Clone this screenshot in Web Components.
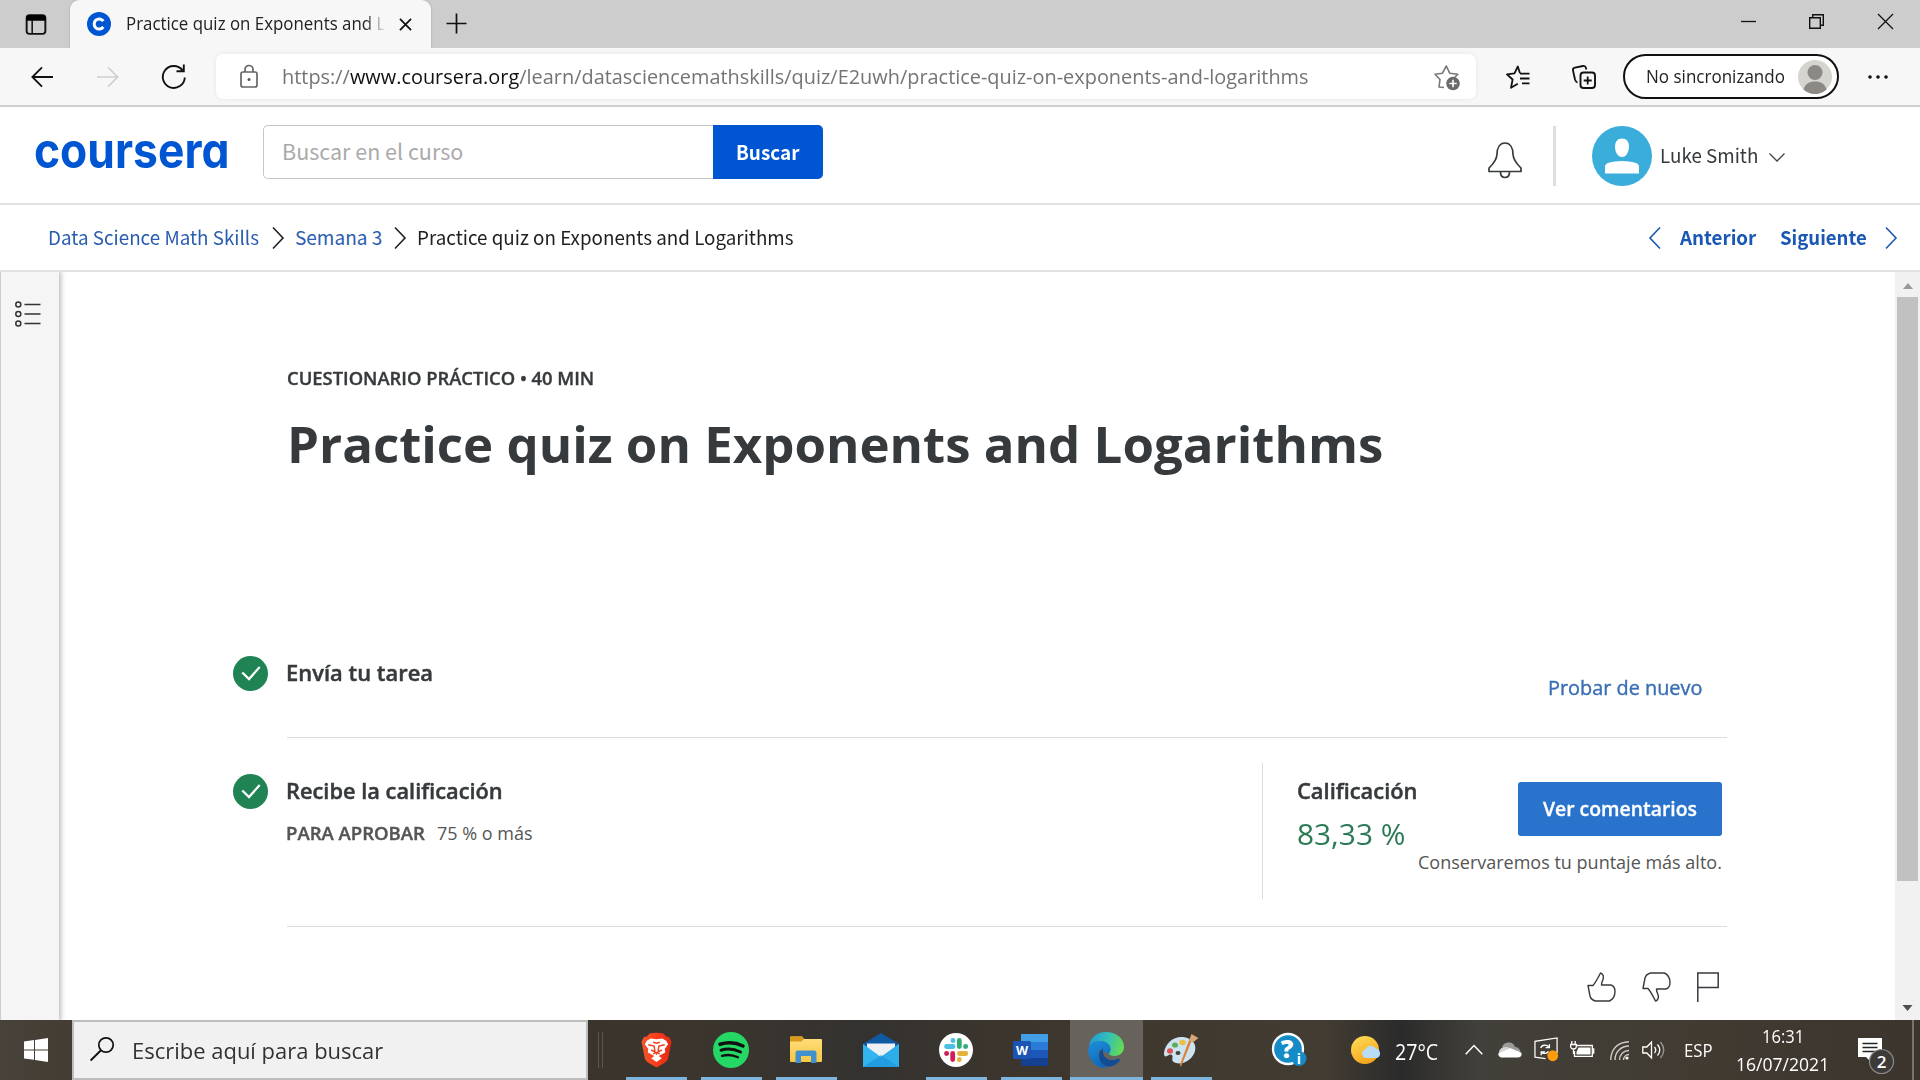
<!DOCTYPE html>
<html lang="es">
<head>
<meta charset="utf-8">
<title>Practice quiz on Exponents and Logarithms</title>
<style>
html,body{margin:0;width:1920px;height:1080px;overflow:hidden;background:#fff}
body{font-family:"Open Sans","Noto Sans",sans-serif;color:#373a3c}
</style>
</head>
<body>
<desktop-screen></desktop-screen>
<script>
const svg=(vb,body)=>`<svg viewBox="${vb}" fill="none" xmlns="http://www.w3.org/2000/svg">${body}</svg>`;
const ICONS={
tabs:svg('0 0 22 22','<rect x="1.2" y="1.2" width="19.6" height="19.6" rx="3" stroke="#111" stroke-width="2"/><path d="M1 4a3 3 0 0 1 3-3h14a3 3 0 0 1 3 3v3H1z" fill="#000"/><path d="M7 6v15" stroke="#111" stroke-width="1.6"/>'),
favicon:svg('0 0 24 24','<circle cx="12" cy="12" r="12" fill="#0056d2"/><path d="M16.3 9.2A5 5 0 1 0 16.3 14.8" stroke="#fff" stroke-width="3"/>'),
x:svg('0 0 14 14','<path d="M1 1l12 12M13 1L1 13" stroke="#111" stroke-width="1.9"/>'),
plus:svg('0 0 22 22','<path d="M11 .5v21M.5 11h21" stroke="#111" stroke-width="1.8"/>'),
min:svg('0 0 15 15','<path d="M0 7.5h15" stroke="#111" stroke-width="1.3"/>'),
restore:svg('0 0 15 15','<path d="M.7 3.7h10.6v10.6H.7zM3.7 3.5V.7h10.6v10.6h-3" stroke="#111" stroke-width="1.4"/>'),
close:svg('0 0 15 15','<path d="M0 0l15 15M15 0L0 15" stroke="#111" stroke-width="1.3"/>'),
back:svg('0 0 24 24','<path d="M12 1.5L1.5 12 12 22.5M1.5 12H24" stroke="#111" stroke-width="2"/>'),
fwd:svg('0 0 24 24','<path d="M12 1.5L22.5 12 12 22.5M22.5 12H0" stroke="#cfcfcf" stroke-width="1.8"/>'),
reload:svg('0 0 24 24','<path d="M22.8 12.5A11 11 0 1 1 20.5 5.2M14.5 6.2h7.3V-.5" stroke="#111" stroke-width="1.9"/>'),
lock:svg('0 0 18 23','<rect x="1" y="7" width="16" height="15" rx="2" stroke="#666" stroke-width="1.7"/><path d="M5 7V4.500a4 4 0 0 1 8 0V7" stroke="#666" stroke-width="1.7"/><circle cx="9" cy="14.5" r="1.5" fill="#555"/>'),
starplus:svg('0 0 26 26','<path d="M10 22.5L5 22l1-7.500L1 9.300l7.300-1L12.300 1l3.500 7.300 8 1-3 3" stroke="#777" stroke-width="1.6" stroke-linejoin="round"/><circle cx="19" cy="18.5" r="6.8" fill="#6a6a6a"/><path d="M19 14.800v7.400M15.300 18.500h7.400" stroke="#fff" stroke-width="1.6"/>'),
fav:svg('0 0 24 24','<path d="M14 8.300L11.800 1.500 8.500 8.300 1 9.300l5.600 5.200L5 22.800l6.800-4" stroke="#111" stroke-width="1.8" stroke-linejoin="round"/><path d="M14 8.700h9.500M14 13.500h9.500M16 18.300h7.500" stroke="#111" stroke-width="1.8"/>'),
coll:svg('0 0 24 24','<rect x="8.500" y="7.500" width="14.500" height="15.500" rx="3" stroke="#111" stroke-width="1.900"/><path d="M15.700 11.500v8M11.700 15.500h8M5.500 17.500C4 17.300 3.500 16 3 14.500L1 5.500C.700 4 1.500 3 3 2.700L11 1c1.600-.300 2.600.500 3 2l.300 1.500" stroke="#111" stroke-width="1.800"/>'),
person:svg('0 0 34 34','<circle cx="17" cy="17" r="17" fill="#d6d4d1"/><circle cx="17" cy="12.500" r="7.500" fill="#8c8884"/><path d="M5.500 29.500C7 24 11 21.500 17 21.500s10 2.500 11.500 8A17 17 0 0 1 5.500 29.500z" fill="#8c8884"/>'),
dots:svg('0 0 20 4','<circle cx="2" cy="2" r="1.800" fill="#111"/><circle cx="10" cy="2" r="1.800" fill="#111"/><circle cx="18" cy="2" r="1.800" fill="#111"/>'),
bell:svg('0 0 34 37','<path d="M1 29.500V26C4.500 22.500 8.500 19 9 12.500 9 5.500 12 1 17 1s8 4.500 8 11.500c.500 6.500 4.500 10 8 13.500v3.500z" stroke="#373a3c" stroke-width="1.700" stroke-linejoin="round"/><path d="M12.500 30c0 3.500 2 5.500 4.500 5.500s4.500-2 4.500-5.500" stroke="#373a3c" stroke-width="1.700"/>'),
avatar:svg('0 0 60 60','<circle cx="30" cy="30" r="30" fill="#3aaddb"/><path d="M30 12.500c4.500 0 7 3 7 8.500 0 5-3 10-7 10s-7-5-7-10c0-5.500 2.500-8.500 7-8.500z" fill="#fff"/><path d="M13 47.500V41c0-2.500 1.500-3.500 4-4.200C20.500 35.800 25 35 30 35s9.500.800 13 1.800c2.500.700 4 1.700 4 4.200v6.500z" fill="#fff"/>'),
down:svg('0 0 16 9','<path d="M.500.500L8 8 15.500.500" stroke="#444" stroke-width="1.300"/>'),
right:svg('0 0 12 22','<path d="M1 .500L11 11 1 21.500" stroke="currentColor" stroke-width="1.600"/>'),
left:svg('0 0 12 22','<path d="M11 .500L1 11l10 10.500" stroke="currentColor" stroke-width="1.600"/>'),
list:svg('0 0 26 26','<g stroke="#333" stroke-width="1.500"><ellipse cx="3.300" cy="3.500" rx="2.500" ry="2.500"/><ellipse cx="3.300" cy="13" rx="2.500" ry="2.500"/><ellipse cx="3.300" cy="22.500" rx="2.500" ry="2.500"/><path d="M9.500 3.500H25.500M9.500 13H25.500M9.500 22.500H25.500"/></g>'),
check:svg('0 0 35 35','<circle cx="17.500" cy="17.500" r="17.500" fill="#1f8354"/><path d="M9.300 16.500l6.700 6.500L26.700 11" stroke="#fff" stroke-width="2.300"/>'),
up1:svg('0 0 29 30','<path d="M1 13.500h5C9 10 11 6 13.500 1c3 1 3.500 4 2.300 7-.800 2-1.500 3.500-1.300 5H24c3 1 4 3.500 4 6.500 0 4-1.500 7.500-5.500 9.500H8.500C5 28 3.500 26 3 24z" stroke="#373a3c" stroke-width="1.400" stroke-linejoin="round"/>'),
flag:svg('0 0 22 30','<path d="M.800 30V1h20.400v14.500H.800" stroke="#373a3c" stroke-width="1.500"/>'),
sup:svg('0 0 10 6','<path d="M0 6L5 0l5 6z" fill="#999"/>'),
sdn:svg('0 0 10 6','<path d="M0 0L5 6l5-6z" fill="#505050"/>'),
win:svg('0 0 24 24','<path d="M0 3.500l10-1.400v9.300H0zM11 2l13-2v11.400H11zM0 12.500h10v9.300L0 20.500zM11 12.500h13V24l-13-2z" fill="#fff"/>'),
search:svg('0 0 24 24','<circle cx="16" cy="8" r="7.200" stroke="#111" stroke-width="1.700"/><path d="M11 13.300L.600 23.500" stroke="#111" stroke-width="1.900"/>'),
brave:svg('0 0 32 36','<defs><linearGradient id="b"><stop stop-color="#f0582a"/><stop offset=".5" stop-color="#f93c1c"/><stop offset="1" stop-color="#e02a10"/></linearGradient></defs><path d="M9 1Q16-.500 23 1l3 3 3 .500 2.500 5-1 5L28 27q-1 3-4 4.500L16 36 8 31.500Q5 30 4 27L1.500 14.500l-1-5L3 4.500 6 4z" fill="url(#b)"/><path d="M6 8.500l4-2.500 6 1 6-1 4 2.500 2 3.500-3.500 5 .500 3.500-5.500 3-1 1 3 2-5.500 4-5.500-4 3-2-1-1-5.500-3 .500-3.500L4 12z" fill="#fff"/><path d="M7.500 12.500l6 1.500 1 6-4-2M24.500 12.500l-6 1.500-1 6 4-2M12.500 10l3.500 1 3.500-1M12.500 22l3.500-1.500 3.500 1.500M16 20v3" stroke="#f0401f" stroke-width="1.500"/>'),
spotify:svg('0 0 36 36','<circle cx="18" cy="18" r="18" fill="#25d865"/><path d="M7 12.300Q19 8.500 30 14" stroke="#111" stroke-width="3.600" stroke-linecap="round"/><path d="M8 18.200Q18 15.300 27.500 20" stroke="#111" stroke-width="3" stroke-linecap="round"/><path d="M9 23.800Q17.500 21.500 25 25.300" stroke="#111" stroke-width="2.400" stroke-linecap="round"/>'),
folder:svg('0 0 34 28','<defs><linearGradient id="f" x2="0" y2="1"><stop stop-color="#ffdf7e"/><stop offset="1" stop-color="#f8c745"/></linearGradient></defs><path d="M1 1.500Q1 .500 2 .500H13l2 2.500H32q1 0 1 1V25q0 1-1 1H2q-1 0-1-1z" fill="url(#f)"/><path d="M1 1.500Q1 .500 2 .500H13l2 2.500-2.500 2.500H1z" fill="#d9991b"/><path d="M6.500 27V17q0-2.500 2.500-2.500H25q2.500 0 2.500 2.500V27H22V20H12V27z" fill="#4291cf"/>'),
mail:svg('0 0 36 34','<path d="M18 0L36 11v7H0v-7z" fill="#1059a3"/><path d="M4 10.500H32V25H4z" fill="#edf1f6"/><path d="M0 11l18 13L36 11V34H0z" fill="#32b5ef"/><path d="M18 24L36 11V34z" fill="#2facea"/><path d="M0 34H36L18 22z" fill="#1b90d8" opacity=".65"/>'),
slack:svg('0 0 34 34','<circle cx="17" cy="17" r="17" fill="#fff"/><g stroke-width="4.800" stroke-linecap="round"><path d="M7.500 13.500h6.500M14 7.500v.200" stroke="#4bbfe8"/><path d="M20.300 7.500V13.500M26.500 13.500h.200" stroke="#30ad77"/><path d="M13.700 20.500V26.500M7.500 20.500h.200" stroke="#cd2058"/><path d="M20.300 20.500h6.500M20.300 26.500v.200" stroke="#e3b33c"/></g>'),
word:svg('0 0 36 34','<rect x="8" y="1" width="27" height="32" rx="1.500" fill="#153f91"/><rect x="8" y="17" width="27" height="8" fill="#1c56b8"/><rect x="8" y="9" width="27" height="8" fill="#2c7bd6"/><rect x="8" y="1" width="27" height="8" fill="#429fe6"/><rect x="0" y="8" width="18" height="18" rx="1.500" fill="#1a55b5"/><text x="9" y="21.500" text-anchor="middle" font-family="Open Sans" font-weight="700" font-size="12.500" fill="#fff">W</text>'),
edge:svg('0 0 36 36','<defs><linearGradient id="e1" x1="0" y1=".3" x2="1" y2=".5"><stop stop-color="#229bda"/><stop offset=".5" stop-color="#32bfba"/><stop offset="1" stop-color="#65dc50"/></linearGradient><linearGradient id="e2" x1="0" y1="0" x2=".4" y2="1"><stop stop-color="#1c90dc"/><stop offset="1" stop-color="#1068ba"/></linearGradient></defs><path d="M1 14C2 6 9 0 18 0c11 0 18 7 18 15 0 6-5 9-9.500 9-3.500 0-5.500-1.300-5.500-2.500 0-.8 1.500-1.500 1.500-4C22.500 12 17 9 12 9 6 9 2 12 1 14z" fill="url(#e1)"/><path d="M.5 16C2 11 7 9 12 9c6 0 10.500 3.500 10.500 8 0 2-1.500 3-1.500 4.500-3 0-7-4.500-9-4-4 4 0 14 7 18.500C9 37-1 28 .5 16z" fill="url(#e2)"/><path d="M15 16.500C10 19 10 26 13.500 31c4 5 12 5.500 18-2 1.500-2-.5-2.500-2-2-8 3.500-16-1.500-14.500-10.500z" fill="#124c94"/>'),
paint:svg('0 0 36 36','<path d="M20 5C11 4 2 11 1 21c0 3 1 4 3 3l2-1c2-1 4 0 3.500 2-.5 3-.5 5 3.500 6 8 2 17-4 19-12C34 11 28 6 20 5z" fill="#cde3f0"/><ellipse cx="7" cy="19" rx="3" ry="2.800" fill="#e05353"/><ellipse cx="12" cy="13" rx="3" ry="2.600" fill="#61ad57"/><ellipse cx="19.500" cy="10.500" rx="3.200" ry="2.800" fill="#eebf45"/><ellipse cx="15" cy="21" rx="2.500" ry="2" fill="#44403a"/><path d="M29 8L18.500 33.500l-1 1.500-.5-2.500L26.500 7z" fill="#dc8237"/><path d="M28.500 2l7 4-5 4-4.500-1.500z" fill="#d7a679"/>'),
help:svg('0 0 34 34','<circle cx="16" cy="16" r="15" fill="#168cc7" stroke="#fff" stroke-width="2.300"/><text x="15" y="25" text-anchor="middle" font-family="Open Sans" font-weight="800" font-size="25" fill="#fff">?</text><circle cx="27" cy="25.500" r="7.500" fill="#168cc7"/><text x="27" y="31" text-anchor="middle" font-family="Open Sans" font-weight="700" font-size="14" fill="#fff">i</text>'),
weather:svg('0 0 30 28','<defs><linearGradient id="w" x2=".5" y2="1"><stop stop-color="#ffdf5a"/><stop offset="1" stop-color="#f6a51d"/></linearGradient></defs><circle cx="14" cy="14" r="14" fill="url(#w)"/><path d="M15 22a4.500 4.500 0 0 1-.5-8.800 6 6 0 0 1 10.500-.7A5 5 0 0 1 26 22z" fill="#b9dcf6"/>'),
caret:svg('0 0 18 11','<path d="M.700 10.300L9 1.500l8.300 8.800" stroke="#fff" stroke-width="1.500"/>'),
cloud:svg('0 0 24 16','<path d="M5 15.500a5 5 0 0 1-1-9.500 6 6 0 0 1 6-5.500 6.500 6.500 0 0 1 7 4.500 5.500 5.500 0 0 1 5.500 5z" fill="#9d9b98"/><path d="M4 15.500C1 15.500 0 13 .5 11L12 6l11 4.500c1.500 2 0 5-3 5z" fill="#fff"/><path d="M4 6q4-2 8 0L2 10.500Q0 9 4 6z" fill="#d7d6d5"/>'),
update:svg('0 0 26 26','<path d="M12 22.500L1 21V4.500L24 1V17" stroke="#fff" stroke-width="1.300"/><path d="M7 11.500C8 8 13 7.500 15.500 10.500M16 7.500v3.500h-4M15 15c-1 2-4.500 3-7 1M7.500 19v-3.500h4" stroke="#fff" stroke-width="1.400"/><circle cx="19.500" cy="19.500" r="5.600" fill="#ff9c0b"/>'),
battery:svg('0 0 24 17','<path d="M6.500 4.500h15.800v10.800H4.500V10M22.500 8h1.200v4h-1.200" stroke="#fff" stroke-width="1.300"/><path d="M8.500 6.500h12v7H6.500v-2.500z" fill="#fff"/><path d="M1.800 0v3M5.200 0v3M.700 3.500h5.600V6Q6 8 3.500 8T.700 6zM3.500 8v5" stroke="#fff" stroke-width="1.300"/>'),
wifi:svg('0 0 19 19','<g stroke="#d0cecb" stroke-width="1.400"><path d="M.700 19C1 8 8 1 19 .700M5 19C5 11 11 5 19 5M9.500 19C9.500 13.500 13.500 9.500 19 9.500M13.500 19c0-3 2.500-5.500 5.500-5.500"/></g><circle cx="17" cy="17" r="1.600" fill="#fff"/>'),
sound:svg('0 0 23 18','<path d="M.800 6h4L9.500 1.200v15.600L4.800 12h-4zM12.500 6q2.500 3 0 6M15.500 3.500q4.500 5.500 0 11" stroke="#fff" stroke-width="1.300"/><path d="M18.500 1q6.500 8 0 16" stroke="#999" stroke-width="1.300"/>'),
note:svg('0 0 36 37','<path d="M0 0h24v19H14v6L8 19H0z" fill="#fff"/><path d="M4.500 5.500h15M4.500 9.500h15M4.500 13.500h15" stroke="#222" stroke-width="1.300"/><circle cx="23.500" cy="23.500" r="12" fill="#3c3b3a" stroke="#8d8b88" stroke-width="1.200"/><text x="23.500" y="29.500" text-anchor="middle" font-family="Open Sans" font-weight="600" font-size="17" fill="#fff">2</text>')
};
const def=(name,css,html)=>{
  customElements.define(name,class extends HTMLElement{
    constructor(){super();this.attachShadow({mode:'open'}).innerHTML=`<style>*{box-sizing:border-box}${css}</style>${html}`}
  });
};
/* <ui-icon name w h x y>: x and y are the free space before the icon */
customElements.define('ui-icon',class extends HTMLElement{
  connectedCallback(){
    const a=n=>this.getAttribute(n)||0;
    if(!this.shadowRoot)this.attachShadow({mode:'open'});
    this.shadowRoot.innerHTML=`<style>:host{display:block;flex:none;width:${a('w')}px;height:${a('h')}px;margin-left:${a('x')}px;margin-top:${a('y')}px}svg{display:block;width:100%;height:100%;overflow:visible}</style>${ICONS[a('name')]}`;
  }
});
/* <fit-text w x y>: one line of text set to a measured width */
customElements.define('fit-text',class extends HTMLElement{
  connectedCallback(){
    const a=n=>this.getAttribute(n)||0;
    if(!this.shadowRoot)this.attachShadow({mode:'open'});
    this.shadowRoot.innerHTML=`<style>:host{display:block;flex:none;width:${a('w')}px;margin-left:${a('x')}px;margin-top:${a('y')}px;white-space:nowrap;line-height:1.4}span{display:inline-block;transform-origin:0 50%}</style><span><slot></slot></span>`;
    const s=this.shadowRoot.querySelector('span');
    requestAnimationFrame(()=>{const n=s.offsetWidth;if(n)s.style.transform=`scaleX(${a('w')/n})`});
  }
});

def('browser-tabs',`:host{display:flex;height:48px;background:#cdcdcd;align-items:flex-start;flex:none}
.tab{display:flex;width:361px;height:48px;margin-left:23px;background:#f7f7f7;border-radius:9px 9px 0 0;font-size:17.800px;color:#222;box-shadow:0 0 2px #999}
.clip{width:260px;overflow:hidden;margin:11px 0 0 15px;-webkit-mask:linear-gradient(90deg,#000 92%,transparent 100%)}`,
`<ui-icon name="tabs" w="22" h="21" x="25" y="14"></ui-icon>
<div class="tab"><ui-icon name="favicon" w="24" h="24" x="17" y="12"></ui-icon><div class="clip"><fit-text w="259">Practice quiz on Exponents and L</fit-text></div><ui-icon name="x" w="13" h="13" x="13" y="18"></ui-icon></div>
<ui-icon name="plus" w="21" h="21" x="15" y="13"></ui-icon>
<ui-icon name="min" w="15" h="15" x="1274" y="14"></ui-icon><ui-icon name="restore" w="15" h="15" x="53" y="14"></ui-icon><ui-icon name="close" w="15" h="15" x="54" y="14"></ui-icon>`);

def('browser-toolbar',`:host{display:flex;height:59px;background:#f7f7f7;align-items:center;border-bottom:2px solid #cfcfcf;flex:none}
.addr{display:flex;align-items:center;width:1260px;height:45px;margin-left:30px;background:#fff;border-radius:7px;box-shadow:0 0 4px #e4e4e4;font-size:20.800px;color:#747474}
.addr b{font-weight:400;color:#111}
.pill{display:flex;align-items:center;width:216px;height:45px;margin-left:27px;border:2px solid #111;border-radius:23px;background:#fff;font-size:18px;color:#222}`,
`<ui-icon name="back" w="24" h="22" x="30"></ui-icon><ui-icon name="fwd" w="24" h="22" x="42"></ui-icon><ui-icon name="reload" w="24" h="24" x="42"></ui-icon>
<div class="addr"><ui-icon name="lock" w="18" h="23" x="24"></ui-icon><fit-text w="1027" x="24">https://<b>www.coursera.org</b>/learn/datasciencemathskills/quiz/E2uwh/practice-quiz-on-exponents-and-logarithms</fit-text><ui-icon name="starplus" w="26" h="26" x="125" y="3"></ui-icon></div>
<ui-icon name="fav" w="24" h="24" x="30"></ui-icon><ui-icon name="coll" w="24" h="24" x="42"></ui-icon>
<div class="pill"><fit-text w="139" x="21">No sincronizando</fit-text><ui-icon name="person" w="34" h="34" x="13"></ui-icon></div><ui-icon name="dots" w="20" h="4" x="29"></ui-icon>`);

def('course-header',`:host{display:flex;height:98px;background:#fff;border-bottom:2px solid #e1e1e1;font-family:"Noto Sans CJK SC","Open Sans",sans-serif;align-items:flex-start;flex:none}
.logo{font-family:Inter,sans-serif;font-weight:700;font-size:48.500px;color:#0056d2;font-feature-settings:"cv11";height:68px}
.in{width:450px;height:54px;margin:18px 0 0 34px;border:1.500px solid #c7c7c7;border-right:0;border-radius:5px 0 0 5px;display:flex;align-items:center;font-size:21.500px;color:#aaa}
.go{width:110px;height:54px;margin-top:18px;background:#0056d2;color:#fff;font-weight:700;font-size:19.500px;border-radius:0 5px 5px 0;display:flex;align-items:center}
i{display:block;width:3px;height:60px;background:#dedede;margin:19px 0 0 31px}
.n{font-size:19px;color:#373a3c}`,
`<div class="logo"><fit-text w="195" x="34" y="10">coursera</fit-text></div><div class="in"><fit-text w="181" x="18" y="-2">Buscar en el curso</fit-text></div><div class="go"><fit-text w="63" x="23" y="-1">Buscar</fit-text></div>
<ui-icon name="bell" w="34" h="37" x="665" y="35"></ui-icon><i></i><ui-icon name="avatar" w="60" h="60" x="36" y="19"></ui-icon><div class="n"><fit-text w="98" x="8" y="35">Luke Smith</fit-text></div><ui-icon name="down" w="16" h="9" x="11" y="46"></ui-icon>`);

def('crumb-bar',`:host{display:flex;height:67px;background:#fff;border-bottom:2px solid #e1e1e1;font-family:"Noto Sans CJK SC","Open Sans",sans-serif;align-items:center;flex:none;font-size:19px;color:#1f1f1f}
.l{color:#2a5db0}.b{color:#1a57b4;font-weight:700}ui-icon.b{color:#1a57b4}`,
`<fit-text class="l" w="211" x="48" y="-1">Data Science Math Skills</fit-text><ui-icon name="right" w="12" h="22" x="13"></ui-icon><fit-text class="l" w="87" x="11" y="-1">Semana 3</fit-text><ui-icon name="right" w="12" h="22" x="12"></ui-icon><fit-text w="377" x="11" y="-1">Practice quiz on Exponents and Logarithms</fit-text>
<ui-icon class="b" name="left" w="12" h="22" x="855"></ui-icon><fit-text class="b" w="76" x="19" y="-1">Anterior</fit-text><fit-text class="b" w="87" x="24" y="-1">Siguiente</fit-text><ui-icon class="b" name="right" w="12" h="22" x="18"></ui-icon>`);

def('side-rail',`:host{display:block;width:59px;box-sizing:border-box;flex:none;background:#f5f5f5;border-left:1px solid #ccc;box-shadow:1px 0 5px 1px #bbb;clip-path:inset(0 -10px 0 0)}`,`<div style="display:flex"><ui-icon name="list" w="26" h="26" x="14" y="29"></ui-icon></div>`);

def('scroll-bar',`:host{display:flex;flex-direction:column;align-items:center;width:25px;background:#f1f1f1;flex:none}div{width:21px;height:584px;background:#c1c1c1;margin-top:8px}`,
`<ui-icon name="sup" w="10" h="6" y="11"></ui-icon><div></div><ui-icon name="sdn" w="11" h="6" y="124"></ui-icon>`);

def('quiz-page',`:host{display:flex;flex-direction:column;flex:1;background:#fff}
.cap{font-size:17.600px;font-weight:600;margin-left:287px;-webkit-text-stroke:.35px}
h1{margin:0 0 0 287px;font-size:50px;font-weight:700;line-height:1.4;color:#373a3c}
.wrap{margin-left:-59px;display:flex;flex-direction:column}
.row{display:flex;border-bottom:1px solid #dcdcdc;margin-left:287px;width:1440px;align-items:flex-start}
.t{font-size:21.500px;font-weight:600;-webkit-text-stroke:.45px}
.sub{display:flex;font-size:18px;color:#555}
.sub .p{font-weight:600;-webkit-text-stroke:.4px}
.grade{width:464px;height:136px;border-left:1px solid #dcdcdc;margin-top:25px;display:flex}
.pct{font-size:29px;color:#2b7a55}
.act{display:flex;flex-direction:column;align-items:flex-end;margin-left:1px}
.btn{width:204px;height:54px;background:#2a73cc;border-radius:3px;color:#fff;font-size:20px;font-weight:600;-webkit-text-stroke:.3px;display:flex;align-items:center;margin-top:19px}
.foot{display:flex;margin-left:1587px}
.dn{transform:scaleY(-1)}`,
`<div class="wrap">
<div class="cap"><fit-text w="307" y="94">CUESTIONARIO PRÁCTICO • 40 MIN</fit-text></div>
<h1><fit-text w="1096" y="18">Practice quiz on Exponents and Logarithms</fit-text></h1>
<div class="row" style="height:259px"><ui-icon name="check" w="35" h="35" x="-54" y="177"></ui-icon>
<div class="t"><fit-text w="147" x="18" y="179">Envía tu tarea</fit-text></div>
<div style="font-size:20px;font-weight:500;color:#3a6fb5;-webkit-text-stroke:.4px"><fit-text w="154" x="1115" y="195">Probar de nuevo</fit-text></div></div>
<div class="row" style="height:189px"><ui-icon name="check" w="35" h="35" x="-54" y="36"></ui-icon>
<div style="width:994px;padding-left:18px"><div class="t"><fit-text w="217" y="38">Recibe la calificación</fit-text></div><div class="sub"><fit-text class="p" w="139" y="15">PARA APROBAR</fit-text><fit-text w="96" x="12" y="15">75 % o más</fit-text></div></div>
<div class="grade"><div style="width:120px;margin-left:34px"><div class="t"><fit-text w="120" y="13">Calificación</fit-text></div><div class="pct"><fit-text w="108" y="8">83,33 %</fit-text></div></div>
<div class="act"><div class="btn"><fit-text w="154" x="25">Ver comentarios</fit-text></div><div style="font-size:18px;color:#555"><fit-text w="304" y="14">Conservaremos tu puntaje más alto.</fit-text></div></div></div></div>
<div class="foot"><ui-icon name="up1" w="29" h="30" y="45"></ui-icon><ui-icon class="dn" name="up1" w="29" h="30" x="26" y="45"></ui-icon><ui-icon name="flag" w="22" h="30" x="26" y="45"></ui-icon></div>
</div>`);

def('app-button',`:host{display:flex;width:73px;height:60px;margin-right:2px;flex-direction:column;align-items:center;justify-content:space-between;flex:none}
:host([active]){background:#67635c}
.i{height:57px;display:flex;align-items:center;padding:3px 1px 0 0}
b{display:none;width:61px;height:3px;background:#7db5df}:host([open]) b{display:block}:host([active]) b{width:73px}`,`<div class="i"><slot></slot></div><b></b>`);

def('task-bar',`:host{display:flex;height:60px;flex:none;align-items:flex-start;color:#fff;background:linear-gradient(90deg,#47423a 0,#443d34 3%,#3b342d 31%,#3b352d 36%,#343230 45%,#3b352d 52%,#423c32 69%,#2b2b2b 73%,#42403a 77%,#413b32 88%,#3b352e 100%)}
.s{width:516px;height:60px;margin-left:24px;background:#f1f1f1;border:2px solid #bdbdbd;display:flex;font-size:22.500px;color:#333}
.g{width:5px;height:36px;border:solid #5a554d;border-width:0 1px;margin:12px 17px 0 10px}
.c{width:92px;margin-left:23px;font-size:18.500px;display:flex;flex-direction:column}
.e{width:2px;height:60px;background:#77736d;margin-left:18px}`,
`<ui-icon name="win" w="24" h="24" x="24" y="18"></ui-icon>
<div class="s"><ui-icon name="search" w="24" h="24" x="16" y="15"></ui-icon><fit-text w="251" x="18" y="13">Escribe aquí para buscar</fit-text></div><div class="g"></div>
<app-button open><ui-icon name="brave" w="31" h="36"></ui-icon></app-button>
<app-button open><ui-icon name="spotify" w="36" h="36"></ui-icon></app-button>
<app-button open><ui-icon name="folder" w="34" h="28"></ui-icon></app-button>
<app-button><ui-icon name="mail" w="36" h="34"></ui-icon></app-button>
<app-button open><ui-icon name="slack" w="34" h="34"></ui-icon></app-button>
<app-button open><ui-icon name="word" w="36" h="34"></ui-icon></app-button>
<app-button open active><ui-icon name="edge" w="36" h="36"></ui-icon></app-button>
<app-button open><ui-icon name="paint" w="36" h="36"></ui-icon></app-button>
<ui-icon name="help" w="34" h="34" x="52" y="13"></ui-icon>
<ui-icon name="weather" w="30" h="28" x="45" y="16"></ui-icon><div style="font-size:21px"><fit-text w="43" x="14" y="18">27°C</fit-text></div>
<ui-icon name="caret" w="18" h="11" x="27" y="24"></ui-icon><ui-icon name="cloud" w="24" h="16" x="15" y="22"></ui-icon><ui-icon name="update" w="25" h="25" x="12" y="17"></ui-icon><ui-icon name="battery" w="24" h="17" x="11" y="21"></ui-icon><ui-icon name="wifi" w="19" h="19" x="16" y="21"></ui-icon><ui-icon name="sound" w="23" h="18" x="13" y="21"></ui-icon>
<div style="font-size:18.500px"><fit-text w="29" x="19" y="17">ESP</fit-text></div>
<div class="c"><fit-text w="42" x="26" y="3">16:31</fit-text><fit-text w="93" y="2">16/07/2021</fit-text></div>
<ui-icon name="note" w="36" h="37" x="30" y="18"></ui-icon><div class="e"></div>`);

def('desktop-screen',`:host{display:flex;flex-direction:column;width:1920px;height:1080px;overflow:hidden}main{display:flex;height:748px;flex:none;overflow:hidden}side-rail{position:relative}`,
`<browser-tabs></browser-tabs><browser-toolbar></browser-toolbar><course-header></course-header><crumb-bar></crumb-bar><main><side-rail></side-rail><quiz-page></quiz-page><scroll-bar></scroll-bar></main><task-bar></task-bar>`);
</script>
</body>
</html>
